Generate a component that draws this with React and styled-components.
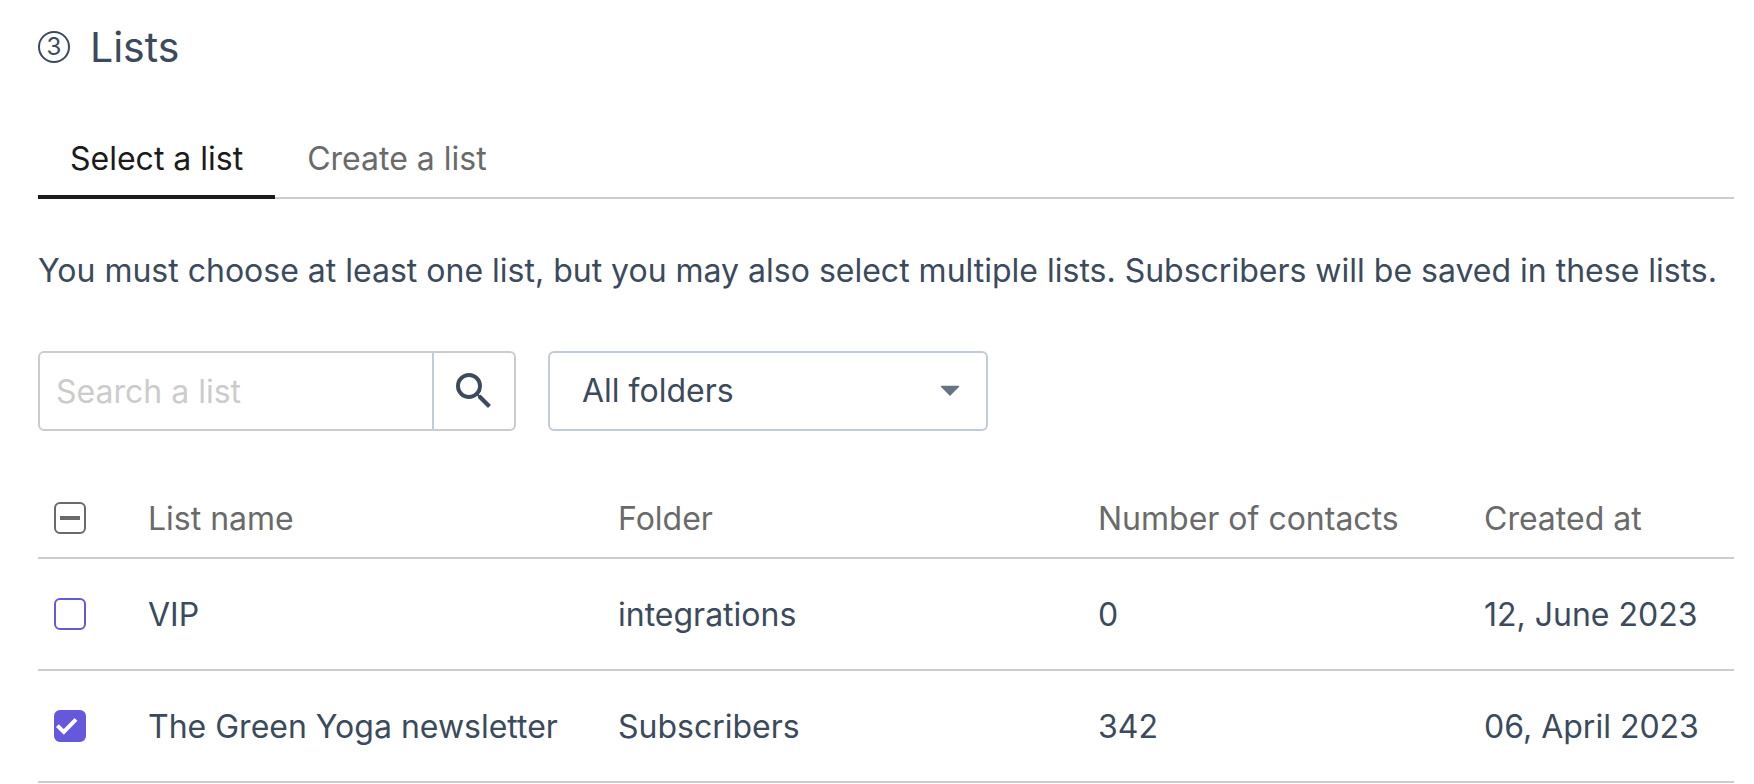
import React, { useEffect, useRef, useState } from "react";
import styled, { createGlobalStyle } from "styled-components";
import { MdSearch } from "react-icons/md";

const ink = "#3b4a5c";
const muted = "#6a6a6a";
const line = "#cccccc";
const softBlue = "#c0ccda";
const accent = "#6558dc";

const GlobalStyle = createGlobalStyle`
  *, *::before, *::after { box-sizing: border-box; }
  body {
    margin: 0;
    background: #ffffff;
    color: ${ink};
    font-family: Inter, "Liberation Sans", sans-serif;
    font-size: 32px;
    line-height: 48px;
  }
  button, input, select { font: inherit; color: inherit; }
`;

const Page = styled.main`
  padding: 19px 20px 0 38px;
`;

const Heading = styled.h1`
  display: flex;
  align-items: center;
  gap: 20px;
  margin: 0 0 44px;
  font-size: 41px;
  line-height: 56px;
  font-weight: 400;
`;

const StepNumber = styled.span`
  display: flex;
  align-items: center;
  justify-content: center;
  width: 32px;
  height: 32px;
  border: 2px solid ${ink};
  border-radius: 50%;
  font-size: 24px;
  line-height: 28px;
  font-weight: 400;
`;

const TabList = styled.div`
  display: flex;
  margin-bottom: 48px;
  box-shadow: inset 0 -2px 0 ${line};
`;

const Tab = styled.button`
  padding: 16px 32px 12px;
  border: 0;
  border-bottom: 4px solid ${(p) => (p.$active ? "#1b1b1b" : "transparent")};
  background: none;
  color: ${(p) => (p.$active ? "#1b1b1b" : muted)};
  cursor: pointer;
`;

const Hint = styled.p`
  margin: 0 0 56px;
`;

const Controls = styled.div`
  display: flex;
  gap: 32px;
  margin-bottom: 48px;
`;

const SearchBox = styled.form`
  display: flex;
  width: 478px;
  height: 80px;
  border: 2px solid ${line};
  border-radius: 6px;
`;

const SearchInput = styled.input`
  flex: 1;
  min-width: 0;
  padding: 2px 16px 0;
  border: 0;
  background: none;
  outline: none;
  &::placeholder { color: ${line}; opacity: 1; }
`;

const SearchButton = styled.button`
  display: flex;
  align-items: center;
  justify-content: center;
  width: 82px;
  padding: 0;
  border: 0;
  border-left: 2px solid ${softBlue};
  background: none;
  cursor: pointer;
`;

const SelectBox = styled.div`
  display: grid;
  align-items: center;
  width: 440px;
  > * { grid-area: 1 / 1; }
`;

const Select = styled.select`
  width: 100%;
  height: 80px;
  padding: 0 64px 0 32px;
  border: 2px solid ${softBlue};
  border-radius: 6px;
  background: #ffffff;
  appearance: none;
`;

const Caret = styled.svg`
  justify-self: end;
  margin-right: 28px;
  pointer-events: none;
`;

const Table = styled.table`
  width: 100%;
  border-collapse: separate;
  border-spacing: 0;
  table-layout: fixed;
`;

const HeadCell = styled.th`
  width: ${(p) => p.$width};
  height: 80px;
  padding: ${(p) => (p.$control ? "0" : "2px 0 0")};
  border-bottom: 2px solid ${line};
  color: ${muted};
  font-weight: 400;
  text-align: left;
`;

const Cell = styled.td`
  height: 112px;
  padding: ${(p) => (p.$control ? "0" : "2px 0 0")};
  border-bottom: 2px solid ${line};
`;

const CheckLabel = styled.label`
  display: grid;
  width: 32px;
  height: 32px;
  margin-left: 16px;
  > * { grid-area: 1 / 1; }
`;

const CheckInput = styled.input`
  width: 32px;
  height: 32px;
  margin: 0;
  border: 2px solid ${(p) => (p.$neutral ? muted : accent)};
  border-radius: 6px;
  appearance: none;
  background: #ffffff;
  &:checked { background: ${(p) => (p.$neutral ? "#ffffff" : accent)}; }
`;

const CheckMark = styled.svg`
  z-index: 1;
  pointer-events: none;
`;

function Checkbox({ label, checked, indeterminate = false, neutral = false, onChange }) {
  const ref = useRef(null);
  useEffect(() => {
    ref.current.indeterminate = indeterminate;
  }, [indeterminate]);
  return (
    <CheckLabel>
      <CheckInput
        ref={ref}
        type="checkbox"
        aria-label={label}
        checked={checked}
        onChange={onChange}
        $neutral={neutral}
      />
      <CheckMark width="32" height="32" viewBox="0 0 32 32" fill="none" aria-hidden="true">
        {indeterminate && <path d="M6 16H26" stroke={muted} strokeWidth="4" />}
        {checked && !indeterminate && (
          <path d="M3.4 15.6L9.8 22L22 9.4" stroke={neutral ? muted : "#ffffff"} strokeWidth="4" />
        )}
      </CheckMark>
    </CheckLabel>
  );
}

const lists = [
  { name: "VIP", folder: "integrations", contacts: "0", created: "12, June 2023" },
  { name: "The Green Yoga newsletter", folder: "Subscribers", contacts: "342", created: "06, April 2023" },
];

export default function App() {
  const [tab, setTab] = useState(0);
  const [selected, setSelected] = useState([false, true]);
  const all = selected.every(Boolean);
  const some = selected.some(Boolean);

  return (
    <>
      <GlobalStyle />
      <Page>
        <Heading>
          <StepNumber>3</StepNumber>
          Lists
        </Heading>
        <TabList role="tablist">
          {["Select a list", "Create a list"].map((name, i) => (
            <Tab key={name} type="button" role="tab" aria-selected={tab === i} $active={tab === i} onClick={() => setTab(i)}>
              {name}
            </Tab>
          ))}
        </TabList>
        <Hint>
          You must choose at least one list, but you may also select multiple lists. Subscribers will be saved in these lists.
        </Hint>
        <Controls>
          <SearchBox role="search" onSubmit={(e) => e.preventDefault()}>
            <SearchInput type="text" placeholder="Search a list" aria-label="Search a list" />
            <SearchButton type="submit" aria-label="Search">
              <MdSearch size={48} />
            </SearchButton>
          </SearchBox>
          <SelectBox>
            <Select aria-label="Folder">
              <option>All folders</option>
              <option>integrations</option>
              <option>Subscribers</option>
            </Select>
            <Caret width="20" height="12" viewBox="0 0 20 12" aria-hidden="true">
              <path d="M1.5 1.5H18.5L10 10Z" fill="#687484" stroke="#687484" strokeWidth="1.4" strokeLinejoin="round" />
            </Caret>
          </SelectBox>
        </Controls>
        <Table>
          <thead>
            <tr>
              <HeadCell scope="col" $width="110px" $control>
                <Checkbox
                  label="Select all lists"
                  neutral
                  checked={all}
                  indeterminate={some && !all}
                  onChange={() => setSelected(selected.map(() => !all))}
                />
              </HeadCell>
              <HeadCell scope="col" $width="470px">List name</HeadCell>
              <HeadCell scope="col" $width="auto">Folder</HeadCell>
              <HeadCell scope="col" $width="386px">Number of contacts</HeadCell>
              <HeadCell scope="col" $width="250px">Created at</HeadCell>
            </tr>
          </thead>
          <tbody>
            {lists.map((row, i) => (
              <tr key={row.name}>
                <Cell $control>
                  <Checkbox
                    label={"Select " + row.name}
                    checked={selected[i]}
                    onChange={() => setSelected(selected.map((v, j) => (j === i ? !v : v)))}
                  />
                </Cell>
                <Cell>{row.name}</Cell>
                <Cell>{row.folder}</Cell>
                <Cell>{row.contacts}</Cell>
                <Cell>{row.created}</Cell>
              </tr>
            ))}
          </tbody>
        </Table>
      </Page>
    </>
  );
}
